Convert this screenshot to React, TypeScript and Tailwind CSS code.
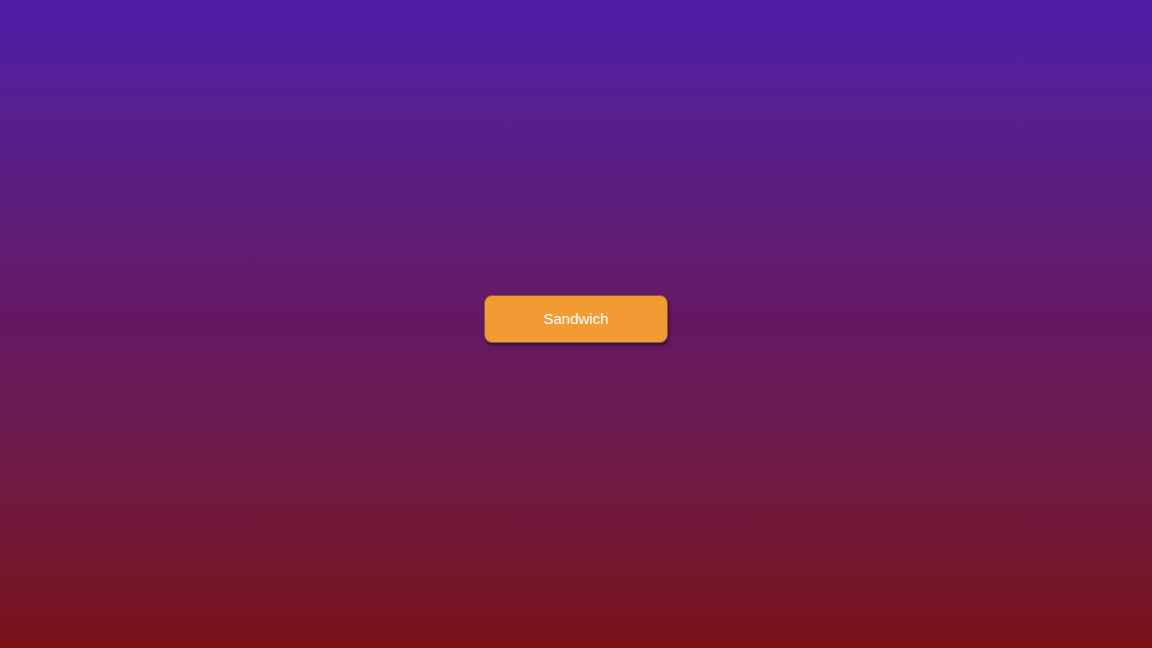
export default function App() {
  return (
    <div className="flex h-screen min-h-[648px] w-full items-center justify-center bg-gradient-to-b from-[#4f1ca8] via-[#651862] to-[#7a1116] font-['Liberation_Sans',Arial,sans-serif]">
      <button
        type="button"
        className="mb-[10px] h-[48px] w-[184px] rounded-[8px] border border-[#8a5a3a] bg-[#f29a33] text-[15px] text-white shadow-[1px_2px_3px_rgba(0,0,0,0.45)]"
      >
        Sandwich
      </button>
    </div>
  );
}
